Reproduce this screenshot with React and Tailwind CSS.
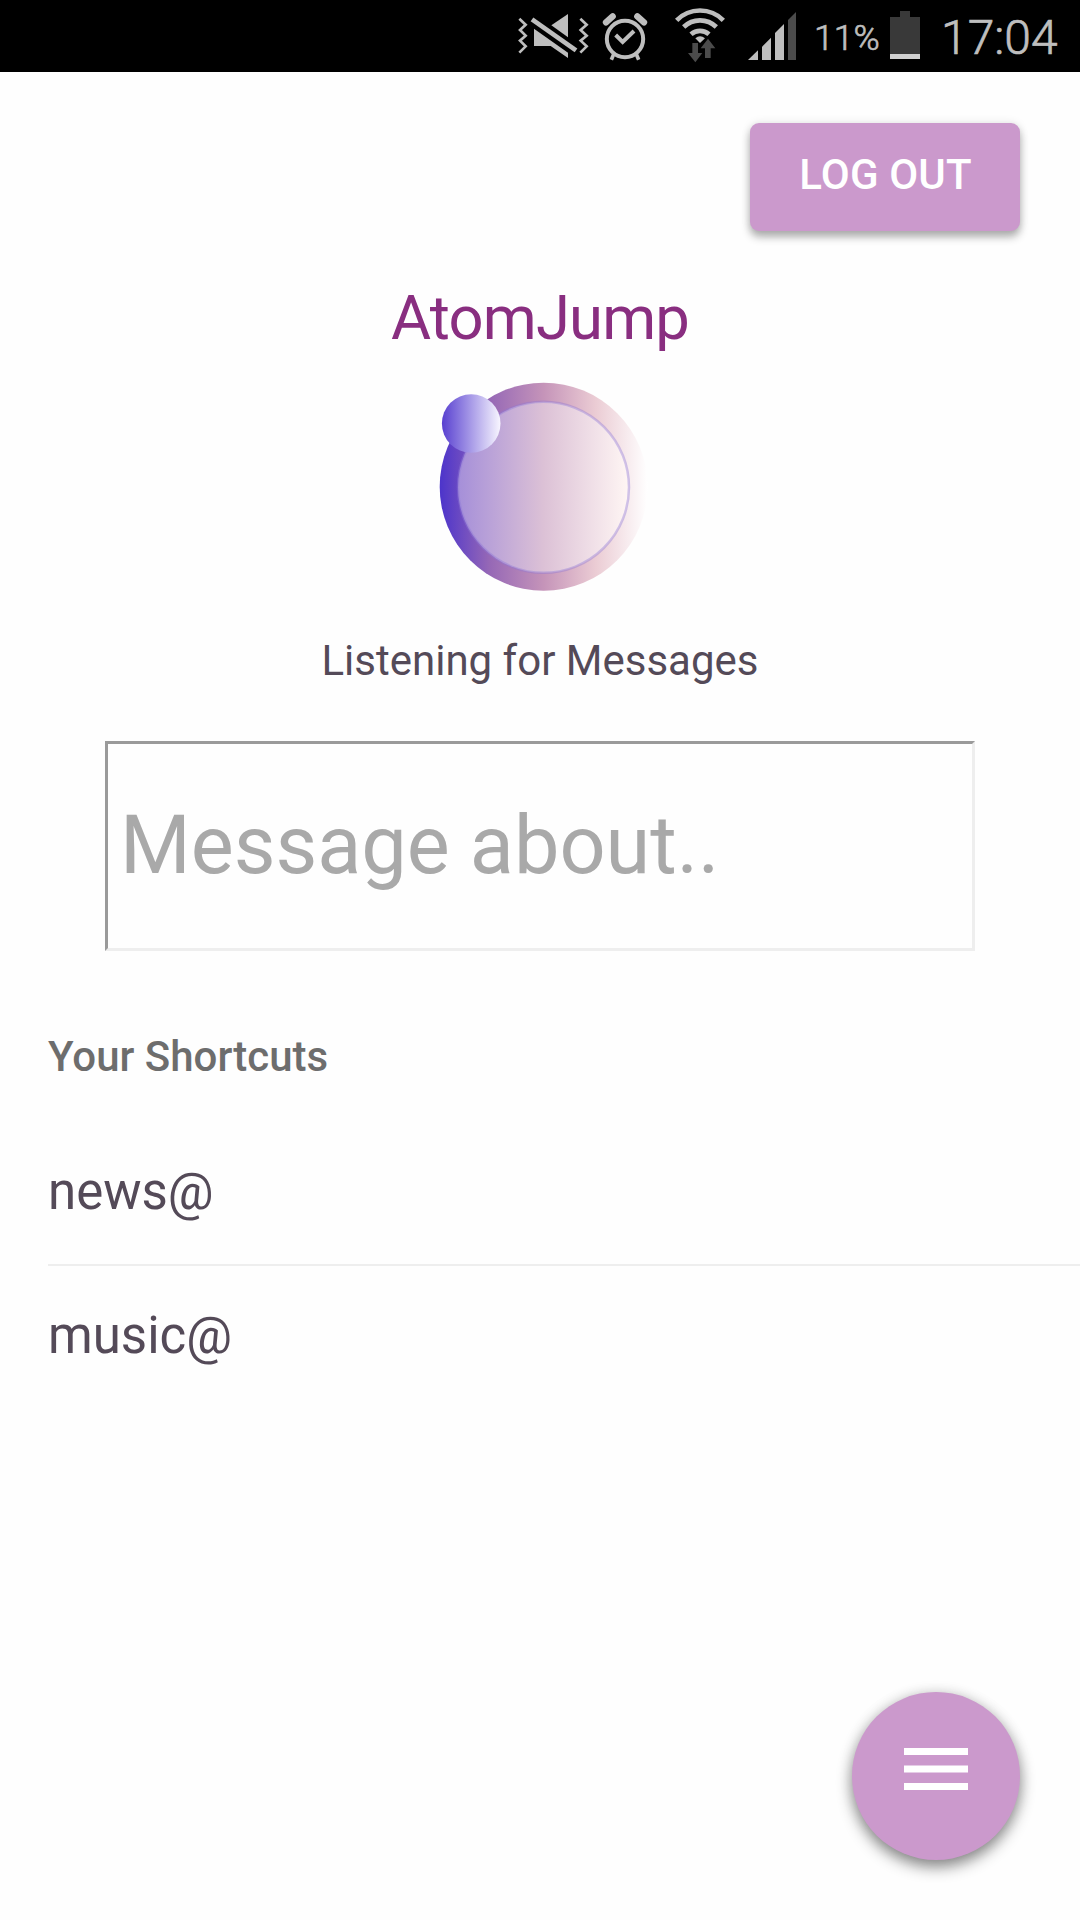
const GREY = "#bebebe";
const DIM = "#4b4b4b";

function VibrateMute() {
  return (
    <svg className="h-[72px] w-[72px] shrink-0" viewBox="51 0 216 216" fill={GREY}>
      <g fill="none" stroke={GREY} strokeWidth="8">
        <path d="M58 56L77 74L60 90L77 107L60 122L77 139L58 158" />
        <path d="M241 56L260 74L242 90L260 107L242 122L260 139L241 158" />
      </g>
      <path d="M204 42V112L154 76Z" />
      <path d="M102 86L204 158V174L152 138H102Z" />
      <path d="M96 58L228 151" stroke={GREY} strokeWidth="14" />
    </svg>
  );
}

function Alarm() {
  return (
    <svg className="ml-[11px] h-[72px] w-[50px] shrink-0" viewBox="300 0 150 216" fill="none" stroke={GREY}>
      <circle cx="375" cy="117" r="54.5" strokeWidth="12" />
      <path d="M347 105L368 126L402 93" strokeWidth="12" />
      <path d="M341 163L334 179M409 163L416 179" strokeWidth="11" />
      <path d="M318 67L338 49M432 67L412 49" strokeWidth="19" strokeLinecap="round" />
    </svg>
  );
}

function Wifi() {
  return (
    <svg className="ml-[24px] h-[72px] w-[52px] shrink-0" viewBox="522 0 156 216" fill="none" stroke={GREY}>
      <g strokeWidth="14">
        <path d="M530 61A98 98 0 0 1 670 61" />
        <path d="M551 81A70 70 0 0 1 649 81" />
        <path d="M573 103A40 40 0 0 1 627 103" />
      </g>
      <path d="M586 115Q600 102 615 115L600 129Z" fill={GREY} stroke="none" />
      <path d="M577 129H594V159H607L586 187L564 159H577Z" fill={DIM} stroke="none" />
      <path d="M615 174H632V145H646L624 116L602 145H615Z" fill={DIM} stroke="none" />
    </svg>
  );
}

function Signal() {
  return (
    <svg className="ml-[21px] h-[72px] w-[50px] shrink-0" viewBox="741 0 150 216" fill={GREY}>
      <path d="M744 180L774 151V180Z" />
      <path d="M786 180V140L813 113V180Z" />
      <path d="M825 180V99L852 72V180Z" />
      <path d="M864 180V60L888 36V180Z" fill={DIM} />
    </svg>
  );
}

function Battery() {
  return (
    <svg className="ml-[9px] h-[72px] w-[32px] shrink-0" viewBox="327 0 96 216">
      <path d="M360 33H390V51H420V177H330V51H360Z" fill="#393939" />
      <path d="M330 162H420V177H330Z" fill="#d0d0d0" />
    </svg>
  );
}

function StatusBar() {
  return (
    <header className="flex h-[72px] items-start bg-black pl-[517px] text-[#bebebe] [-webkit-text-stroke:0.7px_#bebebe]">
      <VibrateMute />
      <Alarm />
      <Wifi />
      <Signal />
      <span className="ml-[17px] w-[66px] text-[35.5px] leading-[76px] font-light whitespace-nowrap">11%</span>
      <Battery />
      <span className="ml-[20px] text-[48px] leading-[75px] font-light whitespace-nowrap">17:04</span>
    </header>
  );
}

function Logo() {
  return (
    <svg className="h-[246px] w-[220px]" viewBox="431 354 220 246">
      <defs>
        <linearGradient id="ring" x1="0" x2="1" y1="0" y2="0">
          <stop offset="0" stopColor="#4c34cb" />
          <stop offset="0.24" stopColor="#9668b6" />
          <stop offset="0.5" stopColor="#c594b9" />
          <stop offset="0.75" stopColor="#ebccd4" />
          <stop offset="1" stopColor="#ffffff" />
        </linearGradient>
        <linearGradient id="core" x1="0" x2="1" y1="0" y2="0">
          <stop offset="0" stopColor="#a58fd9" />
          <stop offset="0.5" stopColor="#dcc1d6" />
          <stop offset="1" stopColor="#fff6f4" />
        </linearGradient>
        <linearGradient id="moon" x1="0" x2="1" y1="0" y2="0">
          <stop offset="0" stopColor="#5840d0" />
          <stop offset="1" stopColor="#f8f6ff" />
        </linearGradient>
      </defs>
      <circle cx="544.7" cy="486.7" r="104" fill="url(#ring)" />
      <circle cx="544.5" cy="487.3" r="85.5" fill="url(#core)" stroke="#8f78d8" strokeOpacity="0.4" strokeWidth="2.5" />
      <circle cx="472.2" cy="423.5" r="29.3" fill="url(#moon)" />
    </svg>
  );
}

export default function App() {
  return (
    <div className="flex h-[1920px] w-[1080px] flex-col overflow-hidden bg-[#fefefe] font-['Roboto',sans-serif] text-[#544a58]">
      <StatusBar />
      <button className="mt-[51px] mr-[60px] h-[108px] w-[270px] self-end rounded-[9px] bg-[#cb99cc] pb-[5px] pl-[1px] text-[42px] leading-[103px] font-medium tracking-[0.15px] text-white shadow-[0_6px_8px_rgba(0,0,0,0.3),0_0_10px_rgba(0,0,0,0.1)]">
        LOG OUT
      </button>
      <main className="flex flex-col items-center">
        <h1 className="mt-[51px] text-[61.5px] leading-[72px] tracking-[-0.8px] text-[#892e80]">AtomJump</h1>
        <Logo />
        <p className="mt-[36px] text-[42px] leading-[50px]">Listening for Messages</p>
        <input
          className="mt-[55px] h-[210px] w-[870px] border-[3px] border-t-[#9a9a9a] border-r-[#eeeeee] border-b-[#eeeeee] border-l-[#9a9a9a] bg-[#fefefe] pr-[11px] pb-[1px] pl-[12px] text-[81px] placeholder:text-[#a9a9a9] placeholder:opacity-100"
          placeholder="Message about.."
        />
      </main>
      <section className="mt-[81px] pl-[48px]">
        <h2 className="text-[42px] leading-[50px] font-medium text-[#6d6d6d]">Your Shortcuts</h2>
        <ul className="mt-[40px] text-[51px]">
          <li className="h-[144px] border-b-2 border-[#eeeeee] leading-[139px]">news@</li>
          <li className="h-[144px] leading-[139px]">music@</li>
        </ul>
      </section>
      <button
        aria-label="Menu"
        className="mt-auto mr-[60px] mb-[60px] flex h-[168px] w-[168px] justify-center self-end rounded-full bg-[#cb99cc] shadow-[0_7px_15px_rgba(0,0,0,0.45),0_0_14px_rgba(0,0,0,0.1)]"
      >
        <svg className="mt-[56px] h-[42px] w-[64px]" viewBox="0 0 64 42" fill="white">
          <path d="M0 0H64V7H0ZM0 17.5H64V24.5H0ZM0 35H64V42H0Z" />
        </svg>
      </button>
    </div>
  );
}
